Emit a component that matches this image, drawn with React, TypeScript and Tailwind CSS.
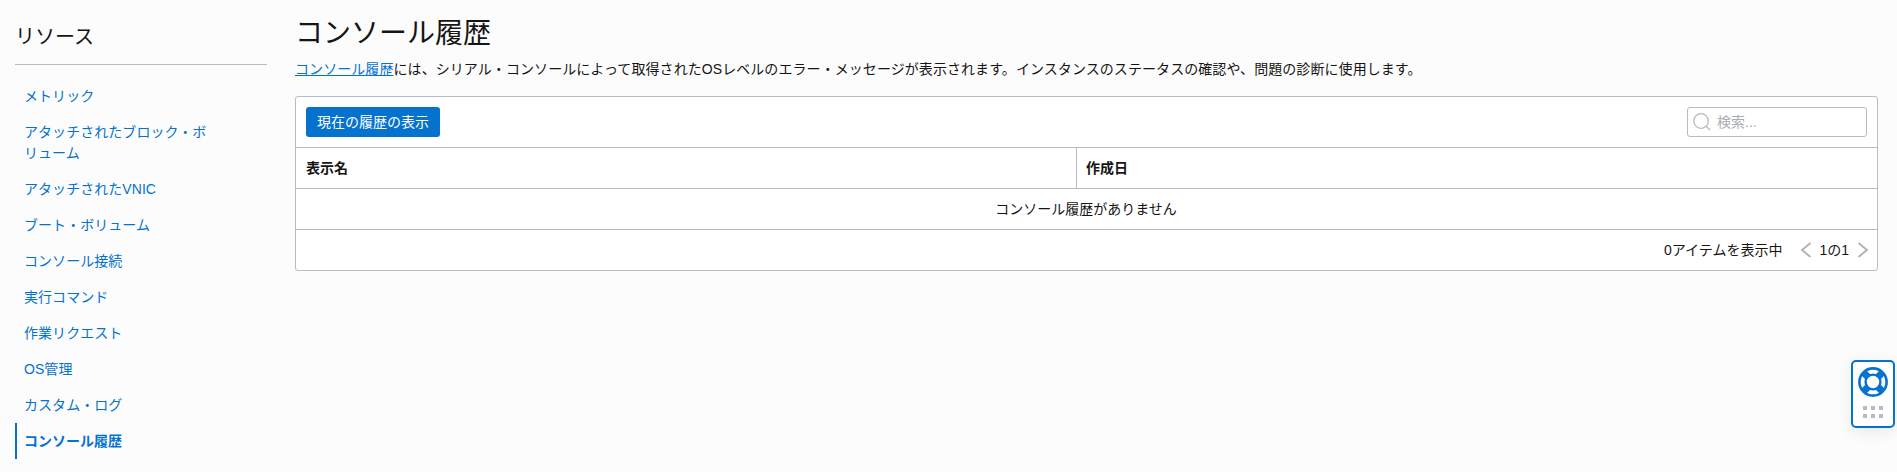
const font = { fontFamily: '"Liberation Sans", "Noto Sans CJK JP", sans-serif' };

const items = [
  "メトリック",
  "アタッチされたブロック・ボリューム",
  "アタッチされたVNIC",
  "ブート・ボリューム",
  "コンソール接続",
  "実行コマンド",
  "作業リクエスト",
  "OS管理",
  "カスタム・ログ",
];

export default function App() {
  return (
    <div style={font} className="relative flex h-[472px] w-[1897px] overflow-hidden bg-[#fcfcfc] text-[14px] leading-[21px] text-[#161513]">
      <aside className="ml-[15px] w-[252px] shrink-0">
        <h2 className="h-[65px] border-b border-[#b6bbc4] pt-[22px] text-[20px] leading-[30px] font-normal text-[#161513]">リソース</h2>
        <ul className="mt-[13px]">
          {items.map((t) => (
            <li key={t} className="w-[200px] py-[7.5px] pl-[9px] text-[#0572ce] tracking-[0.05px]">{t}</li>
          ))}
          <li className="w-[200px] border-l-2 border-[#0572ce] py-[7.5px] pl-[7px] font-bold text-[#0572ce]">コンソール履歴</li>
        </ul>
      </aside>
      <main className="ml-[28px] w-[1583px] shrink-0">
        <h1 className="mt-[13px] text-[28px] leading-[42px] font-normal">コンソール履歴</h1>
        <p className="mt-[4px] h-[21px] tracking-[0.07px]">
          <span className="text-[#0572ce] underline">コンソール履歴</span>には、シリアル・コンソールによって取得されたOSレベルのエラー・メッセージが表示されます。インスタンスのステータスの確認や、問題の診断に使用します。
        </p>
        <section className="mt-[16px] h-[175px] rounded-[3px] border border-[#b6bbc4] bg-white">
          <div className="flex h-[51px] items-center justify-between border-b border-[#b6bbc4] px-[10px]">
            <button className="h-[30px] rounded-[3px] bg-[#0572ce] px-[11px] text-white">現在の履歴の表示</button>
            <div className="flex h-[30px] w-[180px] items-center gap-[6px] rounded-[3px] border border-[#b6bbc4] pl-[5px] text-[#a8acb3]">
              <svg width="18" height="18" viewBox="0 0 18 18" fill="none" stroke="#b4b4b4" strokeWidth="1.2">
                <circle cx="8" cy="8" r="7.3" />
                <path d="M13.2 13.2 L17 17" />
              </svg>
              <span>検索...</span>
            </div>
          </div>
          <div className="flex h-[41px] items-center border-b border-[#b6bbc4] font-bold">
            <div className="flex h-full w-[781px] items-center border-r border-[#b6bbc4] pl-[10px]">表示名</div>
            <div className="pl-[9px]">作成日</div>
          </div>
          <div className="flex h-[41px] items-center justify-center border-b border-[#b6bbc4] pr-[1px]">コンソール履歴がありません</div>
          <div className="flex h-[40px] items-center justify-end pr-[8px]">
            <span>0アイテムを表示中</span>
            <svg className="ml-[18px]" width="12" height="18" viewBox="0 0 12 18" fill="none" stroke="#b0b0b0" strokeWidth="1.8">
              <path d="M10.5 2 L2 9 L10.5 16" />
            </svg>
            <span className="ml-[7px] mr-[8px]">1の1</span>
            <svg width="12" height="18" viewBox="0 0 12 18" fill="none" stroke="#b0b0b0" strokeWidth="1.8">
              <path d="M1.5 2 L10 9 L1.5 16" />
            </svg>
          </div>
        </section>
      </main>
      <div className="absolute top-[360px] left-[1851px] flex h-[68px] w-[44px] flex-col items-center rounded-[5px] border-2 border-[#0572ce] bg-white pt-[5px] shadow-[0_4px_16px_rgba(0,0,0,0.08)]">
        <svg width="30" height="30" viewBox="0 0 30 30" fill="none">
          <circle cx="15" cy="15" r="13.6" stroke="#0572ce" strokeWidth="2.6" />
          <circle cx="15" cy="15" r="7.4" stroke="#0572ce" strokeWidth="2.4" />
          <path d="M6 6 L10 10 M24 6 L20 10 M6 24 L10 20 M24 24 L20 20" stroke="#0572ce" strokeWidth="7" />
        </svg>
        <div className="mt-[9px] grid grid-cols-3 gap-x-[4px] gap-y-[4px]">
          {[0, 1, 2, 3, 4, 5].map((i) => (
            <div key={i} className="h-[4px] w-[4px] bg-[#b6bbc4]" />
          ))}
        </div>
      </div>
    </div>
  );
}
